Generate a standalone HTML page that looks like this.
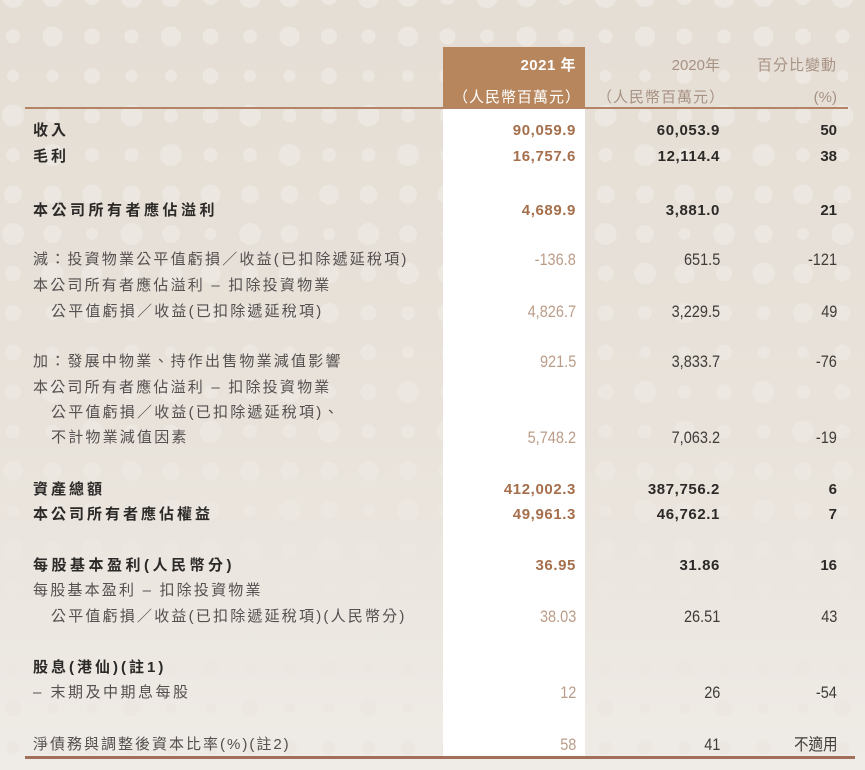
<!DOCTYPE html>
<html><head><meta charset="utf-8"><style>
html,body{margin:0;padding:0}
body{width:865px;height:770px;position:relative;overflow:hidden;background:linear-gradient(#e5ded5 0%,#e8e2da 55%,#efebe6 100%);font-family:"Liberation Sans","Noto Sans CJK TC",sans-serif}
#bg{position:absolute;left:0;top:0}
.box{position:absolute;left:443px;top:47px;width:142px;height:61px;background:#b8865c}
.white{position:absolute;left:443px;top:108px;width:142px;height:648px;background:#fff}
.hl{position:absolute;left:25px;top:107px;width:823px;height:2px;background:#b58466}
.bl{position:absolute;left:25px;top:756px;width:830px;height:3px;background:#a2705a}
.t{position:absolute;white-space:nowrap;font-size:15px;line-height:18px}
.lb{left:33px;color:#2c2a28;font-weight:bold;letter-spacing:3px}
.ln{left:33px;color:#555050;letter-spacing:2.2px}
.r{text-align:right}
.a{right:289px;color:#a66f4c;font-weight:bold;letter-spacing:.6px}
.an,.bn,.cn{font-size:16.5px;transform:scaleX(.88);transform-origin:right}
.an{right:289px;color:#bb9c88}
.b{right:145px;color:#2c2a28;font-weight:bold;letter-spacing:.6px}
.bn{right:145px;color:#3e3b38}
.c{right:28px;color:#2c2a28;font-weight:bold}
.cn{right:28px;color:#3e3b38}
</style></head><body>
<svg id="bg" width="865" height="770"></svg>
<script>
(function(){var s=document.getElementById('bg'),h='';var rs=[11,7,6,8,9,7,11,10,8,11,6,9,10,7,8,11,9,6,10,8,7];
for(var j=0;j<21;j++){var y=-3+j*39.5;for(var i=0;i<23;i++){var x=13+i*39.5;var r=rs[(i*7+j*5)%21];if(y>600)r*=0.75;h+='<circle cx="'+x+'" cy="'+y+'" r="'+r+'" fill="#ece7e0"/>';}}
s.innerHTML=h;})();
</script>
<div class="box"></div><div class="white"></div><div class="hl"></div><div class="bl"></div>
<div class="t r" style="right:289px;top:57px;color:#fff;font-weight:bold;letter-spacing:.5px">2021 年</div>
<div class="t r" style="right:284px;top:89px;color:#fff;letter-spacing:1px">（人民幣百萬元）</div>
<div class="t r" style="right:145px;top:57px;color:#a89284">2020年</div>
<div class="t r" style="right:140px;top:89px;color:#a89284;letter-spacing:1px">（人民幣百萬元）</div>
<div class="t r" style="right:28px;top:57px;color:#a89284;letter-spacing:1px">百分比變動</div>
<div class="t r" style="right:28px;top:89px;color:#a89284">(%)</div>

<div class="t lb" style="top:122px">收入</div><div class="t r a" style="top:122px">90,059.9</div><div class="t r b" style="top:122px">60,053.9</div><div class="t r c" style="top:122px">50</div>
<div class="t lb" style="top:148px">毛利</div><div class="t r a" style="top:148px">16,757.6</div><div class="t r b" style="top:148px">12,114.4</div><div class="t r c" style="top:148px">38</div>
<div class="t lb" style="top:202px;letter-spacing:3.5px">本公司所有者應佔溢利</div><div class="t r a" style="top:202px">4,689.9</div><div class="t r b" style="top:202px">3,881.0</div><div class="t r c" style="top:202px">21</div>

<div class="t ln" style="top:251px">減：投資物業公平值虧損／收益(已扣除遞延稅項)</div><div class="t r an" style="top:251px">-136.8</div><div class="t r bn" style="top:251px">651.5</div><div class="t r cn" style="top:251px">-121</div>
<div class="t ln" style="top:277px">本公司所有者應佔溢利 – 扣除投資物業</div>
<div class="t ln" style="top:303px;left:51px">公平值虧損／收益(已扣除遞延稅項)</div><div class="t r an" style="top:303px">4,826.7</div><div class="t r bn" style="top:303px">3,229.5</div><div class="t r cn" style="top:303px">49</div>

<div class="t ln" style="top:353px">加：發展中物業、持作出售物業減值影響</div><div class="t r an" style="top:353px">921.5</div><div class="t r bn" style="top:353px">3,833.7</div><div class="t r cn" style="top:353px">-76</div>
<div class="t ln" style="top:379px">本公司所有者應佔溢利 – 扣除投資物業</div>
<div class="t ln" style="top:404px;left:51px">公平值虧損／收益(已扣除遞延稅項)、</div>
<div class="t ln" style="top:429px;left:51px">不計物業減值因素</div><div class="t r an" style="top:429px">5,748.2</div><div class="t r bn" style="top:429px">7,063.2</div><div class="t r cn" style="top:429px">-19</div>

<div class="t lb" style="top:481px">資產總額</div><div class="t r a" style="top:481px">412,002.3</div><div class="t r b" style="top:481px">387,756.2</div><div class="t r c" style="top:481px">6</div>
<div class="t lb" style="top:506px">本公司所有者應佔權益</div><div class="t r a" style="top:506px">49,961.3</div><div class="t r b" style="top:506px">46,762.1</div><div class="t r c" style="top:506px">7</div>

<div class="t lb" style="top:557px;letter-spacing:3.5px">每股基本盈利(人民幣分)</div><div class="t r a" style="top:557px">36.95</div><div class="t r b" style="top:557px">31.86</div><div class="t r c" style="top:557px">16</div>
<div class="t ln" style="top:582px">每股基本盈利 – 扣除投資物業</div>
<div class="t ln" style="top:608px;left:51px">公平值虧損／收益(已扣除遞延稅項)(人民幣分)</div><div class="t r an" style="top:608px">38.03</div><div class="t r bn" style="top:608px">26.51</div><div class="t r cn" style="top:608px">43</div>

<div class="t lb" style="top:659px;letter-spacing:3px">股息(港仙)(註1)</div>
<div class="t ln" style="top:684px;letter-spacing:2.5px">– 末期及中期息每股</div><div class="t r an" style="top:684px">12</div><div class="t r bn" style="top:684px">26</div><div class="t r cn" style="top:684px">-54</div>
<div class="t ln" style="top:736px;letter-spacing:2px">淨債務與調整後資本比率(%)(註2)</div><div class="t r an" style="top:736px">58</div><div class="t r bn" style="top:736px">41</div><div class="t r cn" style="top:736px">不適用</div>
</body></html>
